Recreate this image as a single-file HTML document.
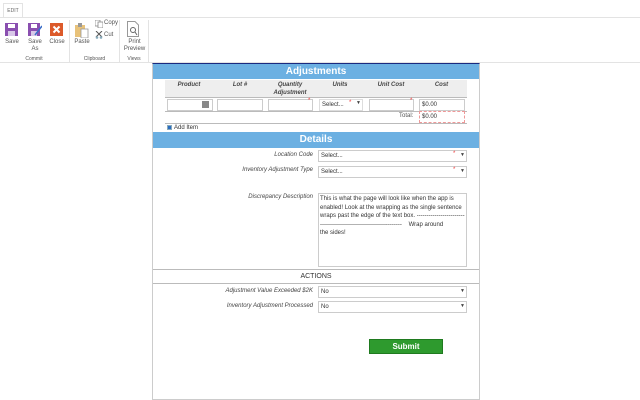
<!DOCTYPE html>
<html><head><meta charset="utf-8"><style>
*{box-sizing:border-box;margin:0;padding:0}
body{width:640px;height:400px;overflow:hidden;background:#fff;font-family:"Liberation Sans",sans-serif;position:relative;color:#444}
.a{position:absolute}
.t{font-size:6px;color:#555;text-align:center;line-height:7px}
.lbl{font-size:6px;font-style:italic;color:#444;text-align:right;width:160px}
.inp{border:1px solid #ccc;background:#fff;height:12px;font-size:6px;line-height:10px;padding-left:2px;color:#333}
.st{color:#e33;font-size:6px}
.hd{background:#6cb0e2;color:#fff;font-weight:bold;font-size:10px;text-align:center;line-height:15px}
.th{font-size:6px;font-style:italic;font-weight:bold;color:#444;text-align:center;line-height:8px}
</style></head><body>
<div class="a" style="left:3px;top:3px;width:20px;height:15px;border:1px solid #e3e3e3;border-bottom:none;font-size:5px;color:#666;text-align:center;line-height:14px">EDIT</div>
<div class="a" style="left:0;top:17px;width:640px;height:1px;background:#e3e3e3"></div>
<div class="a" style="left:0;top:62px;width:640px;height:1px;background:#e3e3e3"></div>
<svg class="a" style="left:5px;top:23px" width="13" height="13"><rect x="0" y="0" width="13" height="13" fill="#8a4fb0"/><rect x="3" y="1" width="7" height="4" fill="#fff"/><rect x="3" y="8" width="7" height="5" fill="#d8c8e8"/></svg>
<div class="a t" style="left:2px;top:39px;width:20px">Save</div>
<svg class="a" style="left:28px;top:23px" width="14" height="13"><rect x="0" y="0" width="12" height="13" fill="#8a4fb0"/><rect x="3" y="1" width="6" height="4" fill="#fff"/><rect x="3" y="8" width="6" height="5" fill="#d8c8e8"/><line x1="7" y1="12" x2="14" y2="3" stroke="#3a6ec8" stroke-width="1.5"/></svg>
<div class="a t" style="left:25px;top:39px;width:20px">Save<br>As</div>
<svg class="a" style="left:50px;top:23px" width="13" height="13"><rect width="13" height="13" fill="#dc5a2a"/><path d="M3.5 3.5L9.5 9.5M9.5 3.5L3.5 9.5" stroke="#fff" stroke-width="2"/></svg>
<div class="a t" style="left:46px;top:39px;width:22px">Close</div>
<div class="a t" style="left:14px;top:56px;width:40px;font-size:5px">Commit</div>
<div class="a" style="left:69px;top:20px;width:1px;height:42px;background:#e3e3e3"></div>
<svg class="a" style="left:75px;top:22px" width="14" height="16"><rect x="0" y="3" width="10" height="12" fill="#e8c27a"/><rect x="3" y="1" width="4" height="4" fill="#999"/><rect x="6" y="7" width="7" height="9" fill="#fff" stroke="#999" stroke-width=".8"/></svg>
<div class="a t" style="left:72px;top:39px;width:20px">Paste</div>
<svg class="a" style="left:95px;top:20px" width="8" height="8"><rect x="0" y="0" width="5" height="6" fill="#fff" stroke="#888" stroke-width=".8"/><rect x="3" y="2" width="5" height="6" fill="#fff" stroke="#888" stroke-width=".8"/></svg>
<div class="a" style="left:104px;top:20px;font-size:6px;color:#555">Copy</div>
<svg class="a" style="left:95px;top:31px" width="8" height="8"><path d="M1 0L7 6M7 0L1 6" stroke="#555" stroke-width="1"/><circle cx="2" cy="6.5" r="1.3" fill="#8ab"/><circle cx="6" cy="6.5" r="1.3" fill="#8ab"/></svg>
<div class="a" style="left:104px;top:32px;font-size:6px;color:#555">Cut</div>
<div class="a t" style="left:72px;top:56px;width:45px;font-size:5px">Clipboard</div>
<div class="a" style="left:119px;top:20px;width:1px;height:42px;background:#e3e3e3"></div>
<svg class="a" style="left:127px;top:21px" width="12" height="16"><path d="M0.5 0.5H8L11.5 4V15.5H0.5Z" fill="#fff" stroke="#999"/><circle cx="6" cy="9" r="2.5" fill="none" stroke="#666"/><path d="M8 11L10 14" stroke="#666"/></svg>
<div class="a t" style="left:122px;top:39px;width:25px">Print<br>Preview</div>
<div class="a t" style="left:122px;top:56px;width:24px;font-size:5px">Views</div>
<div class="a" style="left:148px;top:20px;width:1px;height:42px;background:#e3e3e3"></div>

<div class="a" style="left:152px;top:63px;width:328px;height:337px;border:1px solid #ccc;border-top:1px solid #1a2a80"></div>
<div class="a hd" style="left:153px;top:64px;width:326px;height:15px">Adjustments</div>
<div class="a" style="left:165px;top:80px;width:302px;height:18px;background:#eee;border-bottom:1px solid #bbb"></div>
<div class="a th" style="left:165px;top:81px;width:48px">Product</div>
<div class="a th" style="left:215px;top:81px;width:50px">Lot #</div>
<div class="a th" style="left:265px;top:81px;width:50px">Quantity<br>Adjustment</div>
<div class="a th" style="left:315px;top:81px;width:50px">Units</div>
<div class="a th" style="left:366px;top:81px;width:50px">Unit Cost</div>
<div class="a th" style="left:416px;top:81px;width:51px">Cost</div>
<div class="a inp" style="left:167px;top:99px;width:46px"></div>
<div class="a" style="left:202px;top:101px;width:7px;height:7px;background:#888"></div>
<div class="a inp" style="left:217px;top:99px;width:46px"></div>
<div class="a inp" style="left:268px;top:99px;width:45px"></div><div class="a st" style="left:308px;top:98px">*</div>
<div class="a inp" style="left:319px;top:99px;width:44px;border-color:#ddd">Select...</div><div class="a st" style="left:349px;top:100px">*</div><div class="a" style="left:356px;top:100px;font-size:5px">▼</div>
<div class="a inp" style="left:369px;top:99px;width:45px"></div><div class="a st" style="left:410px;top:98px">*</div>
<div class="a inp" style="left:419px;top:99px;width:46px">$0.00</div>
<div class="a" style="left:165px;top:111px;width:302px;height:1px;background:#bbb"></div>
<div class="a" style="left:399px;top:113px;font-size:6px;color:#555">Total:</div>
<div class="a inp" style="left:419px;top:111px;width:46px;border:1px dashed #e99">$0.00</div>
<div class="a" style="left:165px;top:123px;width:302px;height:1px;background:#bbb"></div>
<div class="a" style="left:167px;top:125px;width:5px;height:5px;background:#2a6bc0;border:1px solid #8ab"></div>
<div class="a" style="left:174px;top:125px;font-size:6px;color:#333">Add Item</div>
<div class="a hd" style="left:153px;top:132px;width:326px;height:16px;line-height:16px">Details</div>
<div class="a lbl" style="left:153px;top:152px">Location Code</div>
<div class="a inp" style="left:318px;top:150px;width:149px">Select...</div><div class="a st" style="left:453px;top:151px">*</div><div class="a" style="left:460px;top:152px;font-size:5px">▼</div>
<div class="a lbl" style="left:153px;top:167px">Inventory Adjustment Type</div>
<div class="a inp" style="left:318px;top:166px;width:149px">Select...</div><div class="a st" style="left:453px;top:167px">*</div><div class="a" style="left:460px;top:168px;font-size:5px">▼</div>
<div class="a lbl" style="left:153px;top:194px">Discrepancy Description</div>
<div class="a" style="left:318px;top:193px;width:149px;height:74px;border:1px solid #ccc;font-size:6px;line-height:8.5px;padding:1px 1px;color:#333;white-space:nowrap;overflow:hidden">This is what the page will look like when the app is<br>enabled! Look at the wrapping as the single sentence<br>wraps past the edge of the text box. ------------------------<br>----------------------------------------- &nbsp; &nbsp;Wrap around<br>the sides!</div>
<div class="a" style="left:153px;top:269px;width:326px;height:1px;background:#bbb"></div>
<div class="a" style="left:153px;top:273px;width:326px;font-size:7px;text-align:center;color:#333">ACTIONS</div>
<div class="a" style="left:153px;top:283px;width:326px;height:1px;background:#bbb"></div>
<div class="a lbl" style="left:153px;top:288px">Adjustment Value Exceeded $2K</div>
<div class="a inp" style="left:318px;top:286px;width:149px">No</div><div class="a" style="left:460px;top:288px;font-size:5px">▼</div>
<div class="a lbl" style="left:153px;top:303px">Inventory Adjustment Processed</div>
<div class="a inp" style="left:318px;top:301px;width:149px">No</div><div class="a" style="left:460px;top:303px;font-size:5px">▼</div>
<div class="a" style="left:369px;top:339px;width:74px;height:15px;background:#2e9a2e;border:1px solid #1f7a1f;color:#fff;font-weight:bold;font-size:8px;text-align:center;line-height:13px">Submit</div>
</body></html>
